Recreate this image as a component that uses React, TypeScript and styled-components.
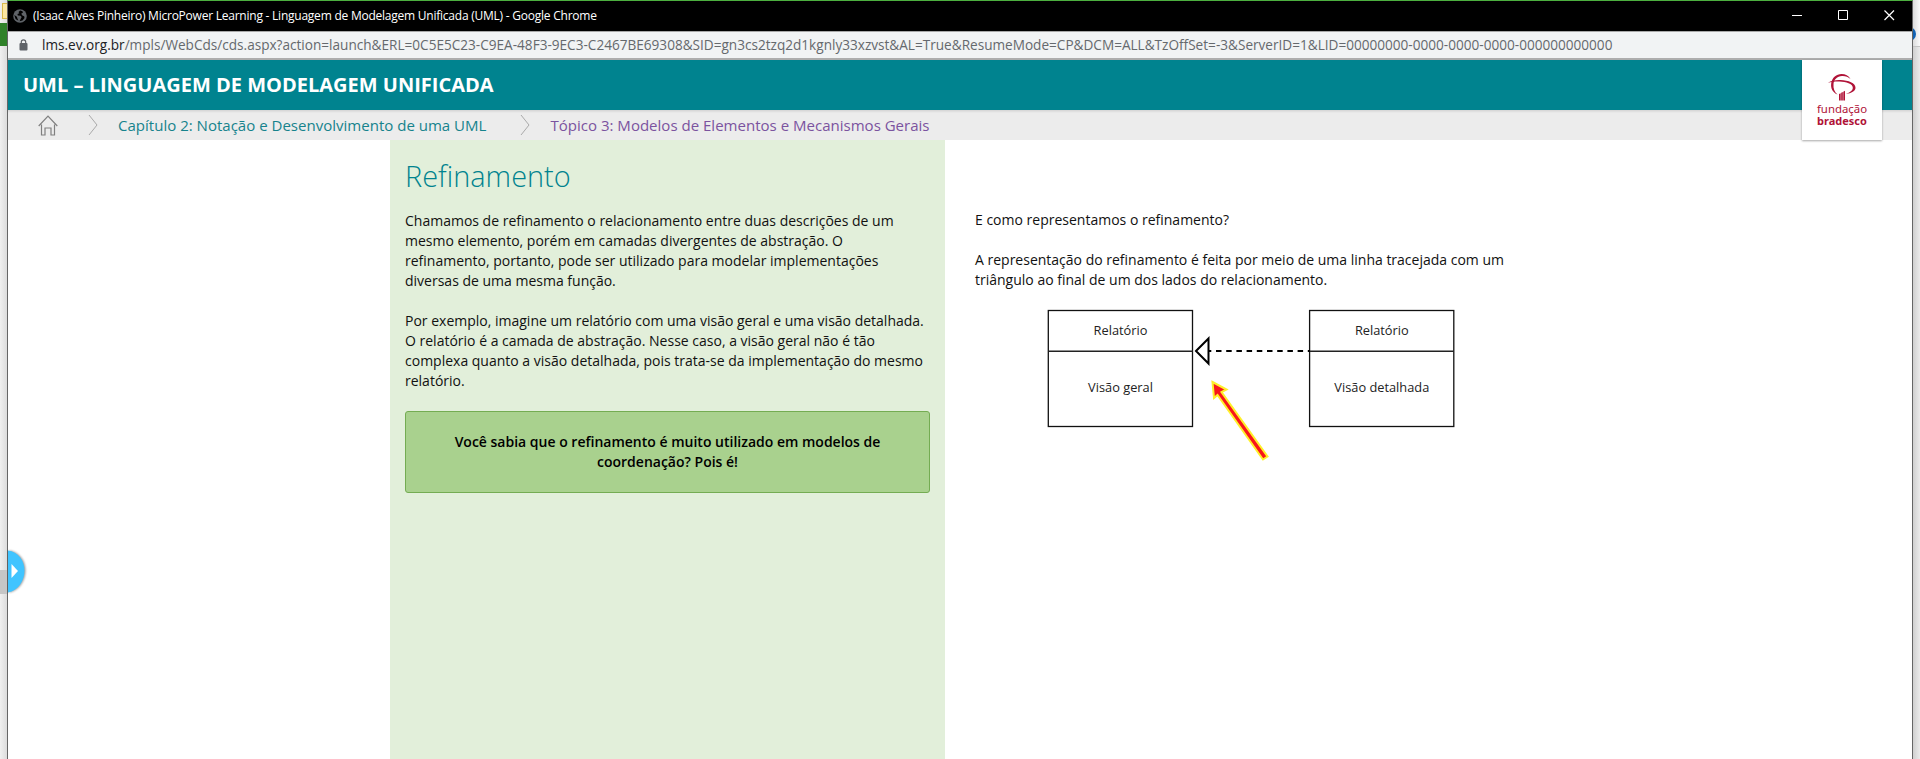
import React from 'react';
import styled, { createGlobalStyle } from 'styled-components';

const Global = createGlobalStyle`
  * { box-sizing: border-box; }
  body { margin: 0; overflow: hidden; background: #e9e9e9; font-family: 'Open Sans', sans-serif; }
  p, h1, h2 { margin: 0; }
`;
const Desktop = styled.div`
  display: flex;
  height: 759px;
  width: 1920px;
`;
const LeftEdge = styled.div`
  width: 7px;
  display: flex;
  flex-direction: column;
  background: linear-gradient(90deg, #f0f0f0, #dcdcdc);
`;
const Strip = styled.div<{ $h: number; $bg: string }>`
  height: ${p => p.$h}px;
  background: ${p => p.$bg};
`;
const FolderEdge = styled.div`
  height: 16px;
  margin: 3px 0 4px 2px;
  border: 1px solid #d9b94a;
  border-right: 0;
  background: #fbe7a2;
`;
const RightEdge = styled.div`
  width: 7px;
  background: linear-gradient(90deg, #d0d0d0, #ebebeb);
  overflow: hidden;
`;
const RightTop = styled.div`
  height: 47px;
  padding-top: 27px;
  background: linear-gradient(90deg, #dcdcdc, #fafafa);
  border-bottom: 1px solid #c4c4c4;
`;
const BlueDot = styled.div`
  width: 14px;
  height: 14px;
  margin-left: -11px;
  border-radius: 50%;
  background: #1062b4;
`;
const Window = styled.div`
  width: 1906px;
  border: 1px solid #666;
  border-top: 1px solid #4caf3f;
  border-bottom: 0;
  background: #fff;
`;
const TitleBar = styled.header`
  height: 30px;
  display: flex;
  align-items: center;
  padding: 0 17px 0 5px;
  background: #000;
  color: #fff;
`;
const WindowTitle = styled.span`
  flex: 1;
  margin-left: 6px;
  font: 12px/30px 'Open Sans', sans-serif;
  letter-spacing: -0.235px;
  white-space: nowrap;
`;
const Controls = styled.div`
  display: flex;
  gap: 35px;
  margin-top: -1px;
`;
const AddressBar = styled.div`
  height: 29px;
  display: flex;
  align-items: center;
  padding-left: 10px;
  border-top: 1px solid #a8a8a8;
  border-bottom: 2px solid #adadad;
  background: #f1f3f4;
`;
const Url = styled.span`
  margin: 0 0 2px 13px;
  font-size: 13.6px;
  color: #65696d;
  white-space: nowrap;
  b { font-weight: 400; color: #202124; }
`;
const CourseHeader = styled.div`
  height: 50px;
  display: flex;
  justify-content: space-between;
  padding: 0 30px 0 15px;
  background: #00838f;
`;
const CourseTitle = styled.h1`
  font-size: 20px;
  line-height: 50px;
  font-weight: 700;
  color: #fff;
  white-space: nowrap;
`;
const LogoCard = styled.div`
  position: relative;
  width: 80px;
  height: 80px;
  background: #fff;
  box-shadow: 0 1px 2px rgba(0, 0, 0, 0.35);
  display: flex;
  flex-direction: column;
  align-items: center;
  padding-top: 14px;
`;
const LogoMark = styled.svg`
  margin-bottom: 2px;
  flex-shrink: 0;
`;
const LogoText = styled.span<{ $bold?: boolean }>`
  font: ${p => (p.$bold ? 700 : 400)} ${p => (p.$bold ? 11 : 11.4)}px/12px 'Noto Sans', sans-serif;
  color: #b01338;
`;
const Breadcrumb = styled.nav`
  height: 30px;
  display: flex;
  align-items: center;
  padding-left: 30px;
  background: linear-gradient(#d4d4d4, #ececec 3px);
  white-space: nowrap;
`;
const Crumb = styled.span<{ $visited?: boolean }>`
  font-size: 15.04px;
  color: ${p => (p.$visited ? '#7b539f' : '#16838c')};
`;
const Chevron = styled.svg<{ $l: number; $r: number }>`
  margin: 0 ${p => p.$r}px 0 ${p => p.$l}px;
`;
const Body = styled.main`
  height: 619px;
  display: flex;
  padding-left: 382px;
`;
const Panel = styled.section`
  width: 555px;
  padding: 12px 15px;
  background: #e2efda;
`;
const Heading = styled.h2`
  height: 59px;
  font-size: 28.9px;
  line-height: 48px;
  font-weight: 300;
  color: #00838f;
`;
const Text = styled.p`
  margin-bottom: 20px;
  font-size: 14px;
  line-height: 20px;
  color: #111;
  white-space: nowrap;
`;
const Callout = styled.div`
  height: 82px;
  padding: 20px 0;
  border: 1px solid #74ac52;
  border-radius: 3px;
  background: #a9d18e;
  color: #000;
  text-align: center;
  font-size: 14px;
  line-height: 20px;
  font-weight: 600;
`;
const Aside = styled.section`
  padding: 70px 0 0 30px;
`;
const Figure = styled.svg`
  display: block;
  margin: -10px 0 0 62px;
`;
const Tab = styled.svg`
  position: absolute;
  left: 8px;
  top: 548px;
  filter: drop-shadow(1px 0 1px rgba(0, 0, 0, 0.4));
`;

const Box = ({ x, title, body }: { x: number; title: string; body: string }) => (
  <g fontFamily="Open Sans, sans-serif" fontSize="12.8" fill="#222" textAnchor="middle">
    <rect x={x} y="10.5" width="144.2" height="116" fill="#fff" stroke="#111" strokeWidth="1.3" />
    <path d={`M${x} 51.2h144.2`} stroke="#222" strokeWidth="1.5" />
    <text x={x + 72.2} y="35">{title}</text>
    <text x={x + 72.2} y="92">{body}</text>
  </g>
);

export default function App() {
  return (
    <>
      <Global />
      <Desktop>
        <LeftEdge>
          <FolderEdge />
          <Strip $h={23} $bg="#2f8128" />
          <Strip $h={524} $bg="transparent" />
          <Strip $h={24} $bg="#c6c6c6" />
        </LeftEdge>
        <Window>
          <TitleBar>
            <svg width="14" height="14" viewBox="0 0 14 14">
              <circle cx="7" cy="7" r="6.8" fill="#5f6368" />
              <path d="M7.2 1.5 5.5 3l.8 1.3-1.8.8.3 1.5 2.7.1 1.2 1.3-.8 1.6-1.4 2.7 3-.7 2-2.6-.3-1.8-1.8-.7-1.2-1.8 1.8-1.2-.6-1.3zM1.3 6l2.6 1.8.5 1.7 1 2.3-2.8-1.7z" fill="#000" />
            </svg>
            <WindowTitle>(Isaac Alves Pinheiro) MicroPower Learning - Linguagem de Modelagem Unificada (UML) - Google Chrome</WindowTitle>
            <Controls>
              <svg width="11" height="11"><path d="M0 5.5h10" stroke="#fff" /></svg>
              <svg width="11" height="11"><path d="M.5.5h9v9h-9z" fill="none" stroke="#fff" /></svg>
              <svg width="11" height="11"><path d="m.5.5 9.5 9.5M10 .5.5 10" stroke="#fff" strokeWidth="1.2" /></svg>
            </Controls>
          </TitleBar>
          <AddressBar>
            <svg width="11" height="12" viewBox="0 0 11 12">
              <rect x="1.5" y="4" width="8" height="7.5" rx="1" fill="#5f6368" />
              <path d="M3.3 4.5V3a2.2 2.2 0 0 1 4.4 0v1.5" fill="none" stroke="#5f6368" strokeWidth="1.2" />
            </svg>
            <Url><b>lms.ev.org.br</b>/mpls/WebCds/cds.aspx?action=launch&amp;ERL=0C5E5C23-C9EA-48F3-9EC3-C2467BE69308&amp;SID=gn3cs2tzq2d1kgnly33xzvst&amp;AL=True&amp;ResumeMode=CP&amp;DCM=ALL&amp;TzOffSet=-3&amp;ServerID=1&amp;LID=00000000-0000-0000-0000-000000000000</Url>
          </AddressBar>
          <CourseHeader>
            <CourseTitle>UML – LINGUAGEM DE MODELAGEM UNIFICADA</CourseTitle>
            <LogoCard>
              <LogoMark width="28" height="27" viewBox="0 0 28 27" fill="#b01338">
                <path d="M9.5 20.5C4.5 18.5 2.5 14 3.2 9.5 4 3.5 8.5 0 13.5 0c4 0 7 1.8 9 5-2.5-2-5-3.2-8.5-3C9 2.2 6 5.5 5.5 10c-.4 4.5 1 8 4 10.500z" />
                <path d="M0 8.8C3 6.5 8 5.8 12.5 6c8 .3 15 3 15 7.8 0 3.2-4 5.5-9.5 6.2 4-1.6 6.8-3.5 6.8-6.2C24.8 9.5 18 7.8 11.5 7.5 7 7.3 3 8 0 8.800z" />
                <path d="M11 20l1.700-.7v7.200H11zM13.200 18.800l1.600-.8v8.500h-1.600zM15.300 17.700l1.700-1v9.800h-1.700z" />
              </LogoMark>
              <LogoText>fundação</LogoText>
              <LogoText $bold>bradesco</LogoText>
            </LogoCard>
          </CourseHeader>
          <Breadcrumb>
            <svg width="20" height="21" fill="none" stroke="#808080" strokeWidth="1.2"><path d="M.7 11 10 1.2 19.3 11M3.5 9.5V20H7v-7h6v7h3.5V9.5" /></svg>
            <Chevron $l={30} $r={20} width="10" height="22" fill="none" stroke="#aaa"><path d="m1 1 8 10-8 10" /></Chevron>
            <Crumb>Capítulo 2: Notação e Desenvolvimento de uma UML</Crumb>
            <Chevron $l={34} $r={20} width="10" height="22" fill="none" stroke="#aaa"><path d="m1 1 8 10-8 10" /></Chevron>
            <Crumb $visited>Tópico 3: Modelos de Elementos e Mecanismos Gerais</Crumb>
          </Breadcrumb>
          <Body>
            <Panel>
              <Heading>Refinamento</Heading>
              <Text>
                Chamamos de refinamento o relacionamento entre duas descrições de um<br />
                mesmo elemento, porém em camadas divergentes de abstração. O<br />
                refinamento, portanto, pode ser utilizado para modelar implementações<br />
                diversas de uma mesma função.
              </Text>
              <Text>
                Por exemplo, imagine um relatório com uma visão geral e uma visão detalhada.<br />
                O relatório é a camada de abstração. Nesse caso, a visão geral não é tão<br />
                complexa quanto a visão detalhada, pois trata-se da implementação do mesmo<br />
                relatório.
              </Text>
              <Callout>
                Você sabia que o refinamento é muito utilizado em modelos de<br />
                coordenação? Pois é!
              </Callout>
            </Panel>
            <Aside>
              <Text>E como representamos o refinamento?</Text>
              <Text>
                A representação do refinamento é feita por meio de uma linha tracejada com um<br />
                triângulo ao final de um dos lados do relacionamento.
              </Text>
              <Figure width="430" height="170">
                <Box x={11.3} title="Relatório" body="Visão geral" />
                <Box x={272.6} title="Relatório" body="Visão detalhada" />
                <path d="M168.8 51h104" stroke="#000" strokeWidth="2" strokeDasharray="5.5 4.7" />
                <path d="M159 51 171.5 38.5v25z" fill="#fff" stroke="#000" strokeWidth="2" />
                <path d="M175.5 82l14 7.5-5 2.5 46 64.5-4.5 3L180.5 95l-3.5 3z" fill="#f8161b" stroke="#fff02a" strokeWidth="2" />
              </Figure>
            </Aside>
          </Body>
        </Window>
        <RightEdge>
          <RightTop><BlueDot /></RightTop>
        </RightEdge>
      </Desktop>
      <Tab width="18" height="46" viewBox="0 0 18 46">
        <path d="M0 2.5C10 4 16.5 12 16.5 22.5S10 42.5 0 44.5z" fill="#40c4ff" />
        <path d="m3.5 16 6.5 7-6.5 7z" fill="#fff" />
      </Tab>
    </>
  );
}
